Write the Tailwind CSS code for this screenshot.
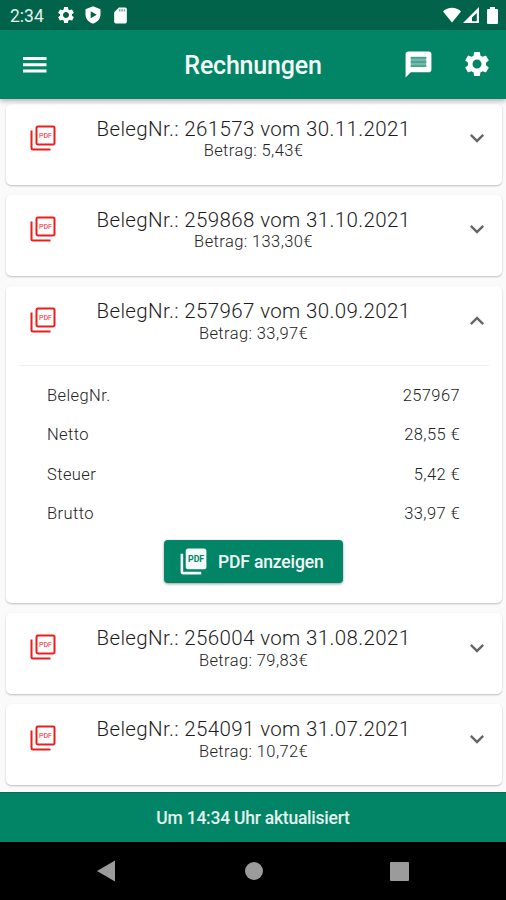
<!DOCTYPE html>
<html lang="de">
<head>
<meta charset="utf-8">
<title>Rechnungen</title>
<script src="https://cdn.jsdelivr.net/npm/@tailwindcss/browser@4"></script>
</head>
<body class="w-[506px] h-[900px] overflow-hidden bg-[#fafafa] font-['Roboto',sans-serif] text-[#1c1c1c] flex flex-col">
<svg class="hidden">
  <symbol id="pdf" viewBox="0 0 24 24"><path fill="none" stroke="currentColor" stroke-width="1.6" d="M7.4 2.8H20a1.2 1.2 0 0 1 1.2 1.2v12a1.2 1.2 0 0 1-1.2 1.2H8A1.2 1.2 0 0 1 6.800 16V4A1.2 1.2 0 0 1 8 2.800M2.800 6v14A1.2 1.2 0 0 0 4 21.200h14"/><text x="14" y="12.200" text-anchor="middle" font-size="6" font-weight="400" fill="currentColor" textLength="10.5" lengthAdjust="spacingAndGlyphs">PDF</text></symbol>
  <symbol id="gear" viewBox="0 0 24 24"><path fill="currentColor" d="M19.14 12.94c.04-.3.06-.61.06-.94 0-.32-.02-.64-.07-.94l2.03-1.58c.18-.14.23-.41.12-.61l-1.92-3.32c-.12-.22-.37-.29-.59-.22l-2.39.96c-.5-.38-1.03-.7-1.62-.94l-.36-2.54c-.04-.24-.24-.41-.48-.41h-3.84c-.24 0-.43.17-.47.41l-.36 2.54c-.59.24-1.13.57-1.62.94l-2.39-.96c-.22-.08-.47 0-.59.22L2.74 8.87c-.12.21-.08.47.12.61l2.03 1.58c-.05.3-.09.63-.09.94s.02.64.07.94l-2.03 1.58c-.18.14-.23.41-.12.61l1.92 3.32c.12.22.37.29.59.22l2.39-.96c.5.38 1.03.7 1.62.94l.36 2.54c.05.24.24.41.48.41h3.84c.24 0 .44-.17.47-.41l.36-2.54c.59-.24 1.13-.56 1.62-.94l2.39.96c.22.08.47 0 .59-.22l1.92-3.32c.12-.22.07-.47-.12-.61l-2.01-1.58zM12 15.6c-1.98 0-3.6-1.62-3.6-3.6s1.62-3.6 3.6-3.6 3.6 1.62 3.6 3.6-1.62 3.6-3.6 3.6z"/></symbol>
  <symbol id="down" viewBox="0 0 24 24"><path fill="currentColor" d="M16.59 8.59 12 13.17 7.41 8.59 6 10l6 6 6-6z"/></symbol>
</svg>

<div class="h-[30px] shrink-0 bg-[#00634a] text-white flex items-center pl-[10px] pr-[8px]">
  <span class="w-[46px] text-[17.500px] pt-[2px] text-[#e6f0ed]">2:34</span>
  <svg class="size-[20px]"><use href="#gear"/></svg>
  <svg class="size-[20px] ml-[7px]" viewBox="0 0 24 24"><path fill="currentColor" fill-rule="evenodd" d="M12 1.500 3 5v6.500c0 5 3.800 9.500 9 11 5.200-1.500 9-6 9-11V5zM9.200 7.500v8.500l7.300-4.200z"/></svg>
  <svg class="size-[19px] ml-[8px]" viewBox="0 0 24 24"><path fill="currentColor" d="M18 2h-8L4 8v12a2 2 0 0 0 2 2h12a2 2 0 0 0 2-2V4a2 2 0 0 0-2-2z"/><path fill="#7eaa9d" d="M10 4h2v3h-2zM13 4h2v3h-2zM16 4h2v3h-2z"/></svg>
  <div class="ml-auto flex items-center">
    <svg class="w-[18px] h-[16px]" viewBox="0 0 18 16"><path fill="currentColor" d="M0 4.500C5-.5 13-.5 18 4.500L9 15.500z"/></svg>
    <svg class="w-[16px] h-[16px] ml-[2px]" viewBox="0 0 16 16"><path fill="currentColor" fill-rule="evenodd" d="M0 16 16 0v16zM9 14.200h4.800V6L9 10.500z"/></svg>
    <svg class="w-[11px] h-[17px] ml-[8px]" viewBox="0 0 11 17"><path fill="currentColor" d="M3 0h5v2h2a1 1 0 0 1 1 1v13a1 1 0 0 1-1 1H1a1 1 0 0 1-1-1V3a1 1 0 0 1 1-1h2z"/></svg>
  </div>
</div>

<header class="h-[69px] shrink-0 relative z-10 bg-[#028566] text-white grid grid-cols-[120px_1fr_120px] items-center shadow-[0_2px_5px_rgba(60,30,50,0.35)]">
  <svg class="w-[24px] h-[18px] ml-[23px]" viewBox="0 0 24 18"><path fill="currentColor" d="M0 1h23.500v3H0zM0 7.300h23.500v3H0zM0 13.500h23.500v3H0z"/></svg>
  <h1 class="text-center text-[25px] font-medium tracking-[-0.2px] pt-[2px] text-[#f3faf8]">Rechnungen</h1>
  <div class="flex items-center justify-end pr-[14px] gap-[28px] pb-[1px]">
    <svg class="size-[31px]" viewBox="0 0 24 24"><path fill="currentColor" d="M20 2H4c-1.100 0-1.990.9-1.990 2L2 22l4-4h14c1.100 0 2-.9 2-2V4c0-1.100-.9-2-2-2z"/><path fill="#75b9a9" d="M6 6h12v8H6z"/><path stroke="#3f9f88" stroke-width="1.200" d="M6 6.800h12M6 10h12M6 13.200h12"/></svg>
    <svg class="size-[30px]"><use href="#gear"/></svg>
  </div>
</header>

<main class="flex-1 min-h-0 flex flex-col gap-[10px] pt-[5px] pl-[6px] pr-[4px]">
  <section class="h-[81px] shrink-0 bg-white rounded-[5px] shadow-[0_1px_2px_rgba(0,0,0,0.24)]">
    <div class="grid grid-cols-[70px_1fr_71px]">
      <svg class="size-[30px] ml-[21.500px] mt-[19px] text-[#ee1c1c]"><use href="#pdf"/></svg>
      <div class="text-center pt-[13px] whitespace-nowrap"><div class="text-[20.500px] leading-[24px] font-light tracking-[0.37px]">BelegNr.: 261573 vom 30.11.2021</div><div class="text-[16.500px] leading-[20px] font-light tracking-[0.4px] text-[#222]">Betrag: 5,43€</div></div>
      <svg class="size-[28px] ml-[32px] mt-[20px] text-[#666]"><use href="#down"/></svg>
    </div>
  </section>
  <section class="h-[81px] shrink-0 bg-white rounded-[5px] shadow-[0_1px_2px_rgba(0,0,0,0.24)]">
    <div class="grid grid-cols-[70px_1fr_71px]">
      <svg class="size-[30px] ml-[21.500px] mt-[19px] text-[#ee1c1c]"><use href="#pdf"/></svg>
      <div class="text-center pt-[13px] whitespace-nowrap"><div class="text-[20.500px] leading-[24px] font-light tracking-[0.37px]">BelegNr.: 259868 vom 31.10.2021</div><div class="text-[16.500px] leading-[20px] font-light tracking-[0.4px] text-[#222]">Betrag: 133,30€</div></div>
      <svg class="size-[28px] ml-[32px] mt-[20px] text-[#666]"><use href="#down"/></svg>
    </div>
  </section>
  <section class="h-[317px] shrink-0 bg-white rounded-[5px] shadow-[0_1px_2px_rgba(0,0,0,0.24)]">
    <div class="grid grid-cols-[70px_1fr_71px] h-[79px]">
      <svg class="size-[30px] ml-[21.500px] mt-[19px] text-[#ee1c1c]"><use href="#pdf"/></svg>
      <div class="text-center pt-[13px] whitespace-nowrap"><div class="text-[20.500px] leading-[24px] font-light tracking-[0.37px]">BelegNr.: 257967 vom 30.09.2021</div><div class="text-[16.500px] leading-[20px] pt-px font-light tracking-[0.4px] text-[#222]">Betrag: 33,97€</div></div>
      <svg class="size-[28px] ml-[32px] mt-[21px] text-[#666] rotate-180"><use href="#down"/></svg>
    </div>
    <div class="mx-[13px] border-t border-[#f0f0f0]"></div>
    <div class="flex flex-col pt-[10px] pl-[41px] pr-[42px] text-[16.500px] leading-[39.400px] font-light tracking-[0.4px] text-[#222]">
      <div class="flex justify-between"><span>BelegNr.</span><span>257967</span></div>
      <div class="flex justify-between"><span>Netto</span><span>28,55 €</span></div>
      <div class="flex justify-between"><span>Steuer</span><span>5,42 €</span></div>
      <div class="flex justify-between"><span>Brutto</span><span>33,97 €</span></div>
    </div>
    <button class="flex items-center w-[179px] h-[43px] mt-[6px] ml-[158px] pl-[14px] gap-[9px] rounded-[4px] bg-[#028566] text-[#f3faf8] shadow-[0_1px_3px_rgba(0,0,0,0.4)]">
      <svg class="size-[31px]" viewBox="0 0 24 24"><path fill="currentColor" d="M8 2h12a2 2 0 0 1 2 2v12a2 2 0 0 1-2 2H8a2 2 0 0 1-2-2V4a2 2 0 0 1 2-2z"/><path fill="none" stroke="currentColor" stroke-width="2" d="M3 6v14a1 1 0 0 0 1 1h14"/><text x="14" y="12.300" text-anchor="middle" font-size="6.500" font-weight="700" fill="#028566" textLength="12.500" lengthAdjust="spacingAndGlyphs">PDF</text></svg>
      <span class="text-[17.500px] font-medium tracking-[-0.15px] pt-[2px]">PDF anzeigen</span>
    </button>
  </section>
  <section class="h-[81px] shrink-0 bg-white rounded-[5px] shadow-[0_1px_2px_rgba(0,0,0,0.24)]">
    <div class="grid grid-cols-[70px_1fr_71px]">
      <svg class="size-[30px] ml-[21.500px] mt-[19px] text-[#ee1c1c]"><use href="#pdf"/></svg>
      <div class="text-center pt-[13px] whitespace-nowrap"><div class="text-[20.500px] leading-[24px] font-light tracking-[0.37px]">BelegNr.: 256004 vom 31.08.2021</div><div class="text-[16.500px] leading-[20px] pt-px font-light tracking-[0.4px] text-[#222]">Betrag: 79,83€</div></div>
      <svg class="size-[28px] ml-[32px] mt-[21px] text-[#666]"><use href="#down"/></svg>
    </div>
  </section>
  <section class="h-[81px] shrink-0 bg-white rounded-[5px] shadow-[0_1px_2px_rgba(0,0,0,0.24)]">
    <div class="grid grid-cols-[70px_1fr_71px]">
      <svg class="size-[30px] ml-[21.500px] mt-[19px] text-[#ee1c1c]"><use href="#pdf"/></svg>
      <div class="text-center pt-[13px] whitespace-nowrap"><div class="text-[20.500px] leading-[24px] font-light tracking-[0.37px]">BelegNr.: 254091 vom 31.07.2021</div><div class="text-[16.500px] leading-[20px] pt-px font-light tracking-[0.4px] text-[#222]">Betrag: 10,72€</div></div>
      <svg class="size-[28px] ml-[32px] mt-[21px] text-[#666]"><use href="#down"/></svg>
    </div>
  </section>
</main>

<div class="h-[50px] shrink-0 bg-[#028566] border-t border-[#027056] flex items-center justify-center pt-[2px] text-[#e3f2ee] text-[17.500px] tracking-[-0.24px] font-medium">Um 14:34 Uhr aktualisiert</div>
<nav class="h-[58px] shrink-0 bg-black flex items-center text-[#9b9b9b]">
  <svg class="w-[18px] h-[22px] ml-[97px]" viewBox="0 0 18 22"><path fill="currentColor" d="M0 11 18 .5v21z"/></svg>
  <div class="size-[18px] rounded-full bg-[#9b9b9b] ml-[130px]"></div>
  <div class="size-[19px] rounded-[1px] bg-[#9b9b9b] ml-[127px]"></div>
</nav>
</body>
</html>
